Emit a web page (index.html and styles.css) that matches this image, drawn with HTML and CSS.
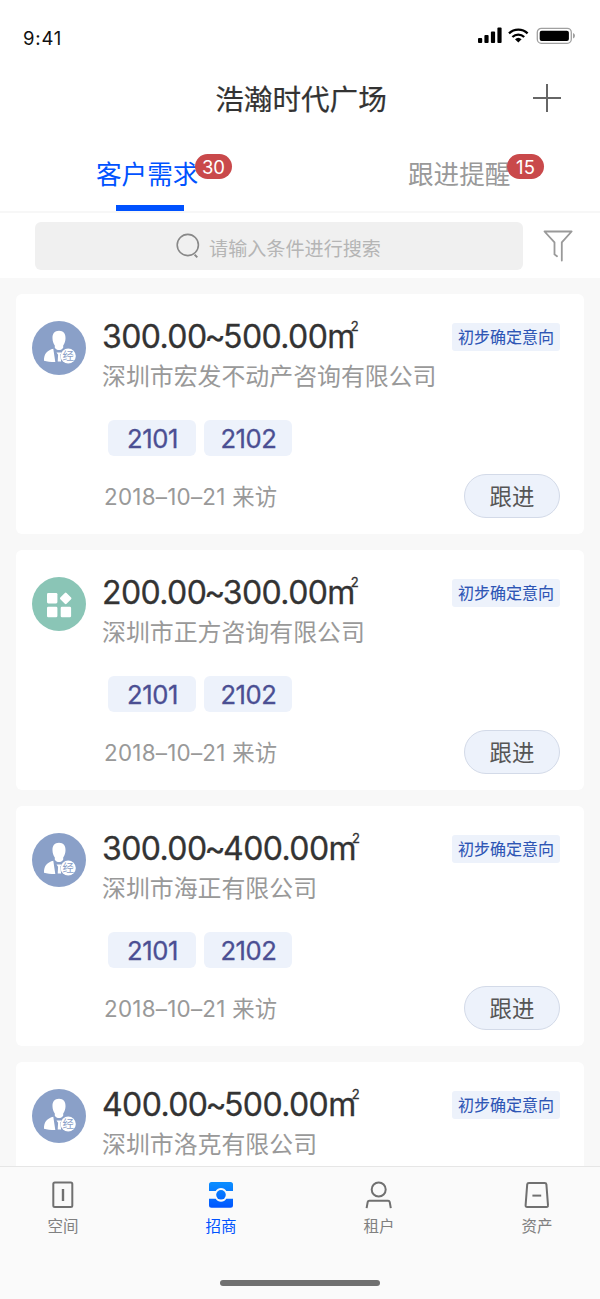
FILE: index.html
```html
<!DOCTYPE html>
<html lang="zh-CN">
<head>
    <meta charset="UTF-8">
    <meta name="viewport" content="width=device-width, initial-scale=1.0">
    <title>浩瀚时代广场</title>
    <link rel="stylesheet" href="styles.css">
</head>
<body>

<svg class="defs" width="0" height="0">
    <symbol id="agent" viewBox="0 0 54 54">
        <circle cx="27" cy="27" r="27" fill="#8aa0c8"/>
        <path d="M27 9.800c-4.500 0-6.700 2.900-6.500 7.700.1 2.600.9 5 2.300 6.900v2.300c1 1.500 2.500 2.300 4.200 2.300s3.200-.8 4.200-2.300v-2.300c1.400-1.900 2.200-4.300 2.300-6.900.2-4.800-2-7.700-6.500-7.700z" fill="#fff"/>
        <path d="M21.300 27.800l2 13.200c-4.800 0-8.500-.4-11.300-1.300-.3-7.200 3.800-10.500 9.300-11.900z" fill="#fff"/>
        <path d="M24.500 31.500h5.200l-1.400 2.300.8 6.700h-3.400l.4-6.700z" fill="#fff"/>
        <circle cx="36.200" cy="35" r="7.600" fill="#fff"/>
    </symbol>
    <symbol id="company" viewBox="0 0 54 54">
        <circle cx="27" cy="27" r="27" fill="#8ac5b6"/>
        <g fill="#fff">
            <rect x="15" y="16" width="10.400" height="10.400" rx="1.300"/>
            <rect x="15" y="29.800" width="10.400" height="10.400" rx="1.300"/>
            <rect x="28.700" y="29.800" width="10.400" height="10.400" rx="1.300"/>
            <rect x="29.300" y="17" width="8.800" height="8.800" rx="1.200" transform="rotate(45 33.700 21.400)"/>
        </g>
    </symbol>
</svg>

<div class="app">
    <div class="status">
        <span class="time">9:41</span>
        <svg class="status-icons" width="98" height="18" viewBox="0 0 98 18">
            <rect x="0" y="11" width="4.200" height="5" rx="1"/>
            <rect x="6.400" y="8" width="4.200" height="8" rx="1"/>
            <rect x="12.900" y="4.500" width="4.200" height="11.500" rx="1"/>
            <rect x="19.400" y="0.500" width="4.200" height="15.500" rx="1"/>
            <g fill="none" stroke="#000" stroke-width="2.300">
                <path d="M31 6.300a13.500 13.500 0 0 1 18.600 0"/>
                <path d="M34.400 10a8.600 8.600 0 0 1 11.800 0"/>
            </g>
            <path d="M40.300 15.400l-3.300-3.200a4.800 4.800 0 0 1 6.600 0z"/>
            <rect x="59.300" y="1.300" width="34" height="15" rx="4" fill="none" stroke="#a0a0a0" stroke-width="1.300"/>
            <rect x="61.700" y="3.700" width="29.200" height="10.400" rx="2"/>
            <path d="M95 6v5.500c1.100-.4 2-1.500 2-2.700s-.9-2.400-2-2.800z" fill="#a0a0a0"/>
        </svg>
    </div>

    <div class="header">
        <h1>浩瀚时代广场</h1>
        <svg class="add" width="28" height="28" viewBox="0 0 28 28">
            <path d="M14 0v28M0 14h28" stroke="#666" stroke-width="2"/>
        </svg>
    </div>

    <div class="tabs">
        <div class="tab active">客户需求<span class="count">30</span></div>
        <div class="tab">跟进提醒<span class="count">15</span></div>
    </div>

    <div class="search">
        <div class="search-box">
            <svg width="24" height="26" viewBox="0 0 24 26" fill="none" stroke="#888" stroke-width="1.600">
                <circle cx="11.800" cy="12" r="10.600"/>
                <path d="M18.600 21.600l2.700 2.800" stroke-width="1.900"/>
            </svg>
            <span>请输入条件进行搜索</span>
        </div>
        <svg class="filter" width="30" height="32" viewBox="0 0 30 32" fill="none" stroke="#999" stroke-width="1.800" stroke-linejoin="round" stroke-linecap="round">
            <path d="M18.800 30.500V12.400L28.600 1.500H1.500l10 10.900v12l2.500 1.900"/>
        </svg>
    </div>

    <div class="list">
        <div class="card">
            <div class="avatar"><svg><use href="#agent"/></svg><span>经</span></div>
            <div class="info">
                <div class="top">
                    <div class="area">300.00<i>~</i>500.00m<sup>2</sup></div>
                    <span class="state">初步确定意向</span>
                </div>
                <div class="name">深圳市宏发不动产咨询有限公司</div>
                <div class="rooms"><span>2101</span><span>2102</span></div>
                <div class="bottom">
                    <span class="date">2018–10–21 来访</span>
                    <button class="follow">跟进</button>
                </div>
            </div>
        </div>

        <div class="card">
            <div class="avatar"><svg><use href="#company"/></svg></div>
            <div class="info">
                <div class="top">
                    <div class="area">200.00<i>~</i>300.00m<sup>2</sup></div>
                    <span class="state">初步确定意向</span>
                </div>
                <div class="name">深圳市正方咨询有限公司</div>
                <div class="rooms"><span>2101</span><span>2102</span></div>
                <div class="bottom">
                    <span class="date">2018–10–21 来访</span>
                    <button class="follow">跟进</button>
                </div>
            </div>
        </div>

        <div class="card">
            <div class="avatar"><svg><use href="#agent"/></svg><span>经</span></div>
            <div class="info">
                <div class="top">
                    <div class="area">300.00<i>~</i>400.00m<sup>2</sup></div>
                    <span class="state">初步确定意向</span>
                </div>
                <div class="name">深圳市海正有限公司</div>
                <div class="rooms"><span>2101</span><span>2102</span></div>
                <div class="bottom">
                    <span class="date">2018–10–21 来访</span>
                    <button class="follow">跟进</button>
                </div>
            </div>
        </div>

        <div class="card">
            <div class="avatar"><svg><use href="#agent"/></svg><span>经</span></div>
            <div class="info">
                <div class="top">
                    <div class="area">400.00<i>~</i>500.00m<sup>2</sup></div>
                    <span class="state">初步确定意向</span>
                </div>
                <div class="name">深圳市洛克有限公司</div>
            </div>
        </div>
    </div>

    <div class="footer">
        <div class="nav">
            <div class="nav-item">
                <svg width="28" height="28" viewBox="0 0 28 28" fill="none" stroke="#707070" stroke-width="2">
                    <rect x="4.300" y="1.500" width="19" height="24.600" rx="1.500"/>
                    <path d="M14 8v12" stroke-width="2.400"/>
                </svg>
                <span>空间</span>
            </div>
            <div class="nav-item active">
                <svg width="28" height="28" viewBox="0 0 28 28">
                    <defs>
                        <linearGradient id="blue" x1="0" y1="0" x2="0" y2="28" gradientUnits="userSpaceOnUse">
                            <stop offset="0.100" stop-color="#0a8cff"/>
                            <stop offset="1" stop-color="#0052ff"/>
                        </linearGradient>
                    </defs>
                    <g fill="url(#blue)">
                        <path d="M4.500 1h19a2.500 2.500 0 0 1 2.500 2.500V10h-6.700a6.200 6.200 0 0 0-10.600 0H2V3.500A2.500 2.500 0 0 1 4.500 1z"/>
                        <path d="M2 17.700h6.700a6.200 6.200 0 0 0 10.600 0H26v6.500a2.500 2.500 0 0 1-2.500 2.500h-19A2.500 2.500 0 0 1 2 24.200z"/>
                        <circle cx="14" cy="13.800" r="4.800"/>
                    </g>
                </svg>
                <span>招商</span>
            </div>
            <div class="nav-item">
                <svg width="28" height="28" viewBox="0 0 28 28" fill="none" stroke="#707070" stroke-width="2">
                    <circle cx="13.700" cy="8.500" r="7"/>
                    <path d="M1.600 27.200l1.100-6.200c.2-.9.700-1.300 1.600-1.300h18.800c.9 0 1.400.4 1.600 1.300l1.100 6.200"/>
                </svg>
                <span>租户</span>
            </div>
            <div class="nav-item">
                <svg width="28" height="28" viewBox="0 0 28 28" fill="none" stroke="#707070" stroke-width="2">
                    <path d="M5.900 1.900h15.800c1 0 1.600.5 1.700 1.500l1.600 21c.1 1-.5 1.700-1.500 1.700H4.100c-1 0-1.600-.7-1.500-1.700l1.600-21c.1-1 .7-1.500 1.700-1.500z"/>
                    <path d="M9.400 14.600h8.800"/>
                </svg>
                <span>资产</span>
            </div>
        </div>
        <div class="home-bar"></div>
    </div>
</div>

</body>
</html>
```
FILE: styles.css
```css
* {
    box-sizing: border-box;
}

body {
    margin: 0;
    font-family: Inter, "Noto Sans CJK SC", sans-serif;
    background-color: #fff;
    color: #333;
}

.defs {
    position: absolute;
}

.app {
    display: flex;
    flex-direction: column;
    width: 600px;
    height: 1299px;
    overflow: hidden;
}

.status {
    display: flex;
    justify-content: space-between;
    height: 64px;
    padding: 27px 24px 0 23px;
}

.time {
    font-size: 18.5px;
    line-height: 23px;
    letter-spacing: 0.8px;
    color: #111;
}

.header {
    display: grid;
    grid-template-columns: 1fr auto 1fr;
    align-items: center;
    height: 68px;
    padding: 0 39px 0 41px;
}

.header h1 {
    grid-column: 2;
    margin: 0;
    padding-top: 3px;
    font-size: 28.6px;
    font-weight: 400;
    line-height: 40px;
    -webkit-text-stroke: 0.2px #333;
}

.add {
    justify-self: end;
}

.tabs {
    display: flex;
    height: 81px;
    border-bottom: 2px solid #f7f7f7;
}

.tab {
    position: relative;
    width: 300px;
    padding: 23px 0 0 108px;
    font-size: 25.6px;
    line-height: 40px;
    color: #999;
}

.tab.active {
    padding-left: 96px;
    color: #0052ff;
}

.tab.active::after {
    content: "";
    position: absolute;
    left: 116px;
    bottom: 0;
    width: 68px;
    height: 6px;
    background-color: #0052ff;
}

.count {
    position: absolute;
    top: 22px;
    left: 207px;
    width: 37px;
    height: 25px;
    border-radius: 13px;
    background-color: #c9494b;
    color: #fff;
    font-size: 18.5px;
    line-height: 26px;
    text-align: center;
}

.active .count {
    left: 195px;
}

.search {
    display: flex;
    align-items: center;
    height: 65px;
    padding: 0 27px 0 35px;
    justify-content: space-between;
}

.search-box {
    display: flex;
    align-items: center;
    justify-content: center;
    gap: 9px;
    width: 488px;
    height: 48px;
    border-radius: 6px;
    background-color: #f0f0f0;
    padding: 1px 1px 0 0;
    color: #b5b5b5;
    font-size: 19.1px;
}

.search-box span {
    padding-top: 3px;
}

.list {
    flex: 1;
    min-height: 0;
    overflow: hidden;
    padding: 16px 16px 0;
    background-color: #f8f8f8;
}

.card {
    display: flex;
    height: 240px;
    margin-bottom: 15.9px;
    padding: 27px 24px 0 16px;
    border-radius: 6px;
    background-color: #fff;
}

.avatar {
    position: relative;
    width: 54px;
    height: 54px;
    margin-right: 16px;
}

.avatar svg {
    display: block;
    width: 54px;
    height: 54px;
}

.avatar span {
    position: absolute;
    top: 28px;
    left: 30.5px;
    font-size: 11.5px;
    line-height: 14px;
    color: #8aa0c8;
}

.info {
    flex: 1;
}

.top {
    display: flex;
    justify-content: space-between;
    height: 36px;
}

.area {
    font-size: 32px;
    line-height: 31px;
    letter-spacing: -0.6px;
    white-space: nowrap;
    -webkit-text-stroke: 0.3px #333;
}

.area i {
    margin: 0 -2px;
    font-style: normal;
}

.area sup {
    position: relative;
    top: -5px;
    left: -4px;
    font-size: 13px;
    line-height: 0;
}

.state {
    height: 28px;
    margin-top: 2px;
    padding: 0 6px;
    border-radius: 3px;
    background-color: #edf2fb;
    color: #2d55b5;
    font-size: 16px;
    line-height: 29px;
    -webkit-text-stroke: 0.1px #2d55b5;
}

.name {
    height: 63px;
    padding-top: 2px;
    font-size: 23.9px;
    line-height: 36px;
    color: #999;
}

.rooms {
    display: flex;
    gap: 8px;
    padding-left: 6px;
}

.rooms span {
    width: 88px;
    height: 36px;
    padding-left: 1px;
    border-radius: 6px;
    background-color: #edf2fb;
    color: #4b4f93;
    font-size: 25.6px;
    letter-spacing: -0.4px;
    line-height: 38px;
    text-align: center;
    -webkit-text-stroke: 0.3px #4b4f93;
}

.bottom {
    display: flex;
    align-items: center;
    justify-content: space-between;
    height: 44px;
    margin-top: 18px;
    padding-left: 2px;
}

.date {
    padding-bottom: 2px;
    font-size: 22.4px;
    letter-spacing: 0.25px;
    color: #999;
}

.follow {
    width: 96px;
    height: 44px;
    padding: 0 0 2px;
    border: 1.5px solid #d3dae8;
    border-radius: 22px;
    background-color: #edf2fb;
    color: #555;
    font-family: inherit;
    font-size: 22.4px;
}

.footer {
    height: 133px;
    border-top: 1px solid #e6e6e6;
    background-color: #fafafa;
}

.nav {
    display: flex;
    justify-content: space-between;
    height: 112px;
    padding: 14px 39px 0;
}

.nav-item {
    display: flex;
    flex-direction: column;
    align-items: center;
    width: 48px;
    color: #808080;
    font-size: 15.5px;
    line-height: 24px;
}

.nav-item span {
    margin-top: 6px;
}

.nav-item.active {
    color: #0052ff;
}

.home-bar {
    width: 160px;
    height: 6px;
    margin: 1px auto 0;
    border-radius: 3px;
    background-color: #707070;
}
```
